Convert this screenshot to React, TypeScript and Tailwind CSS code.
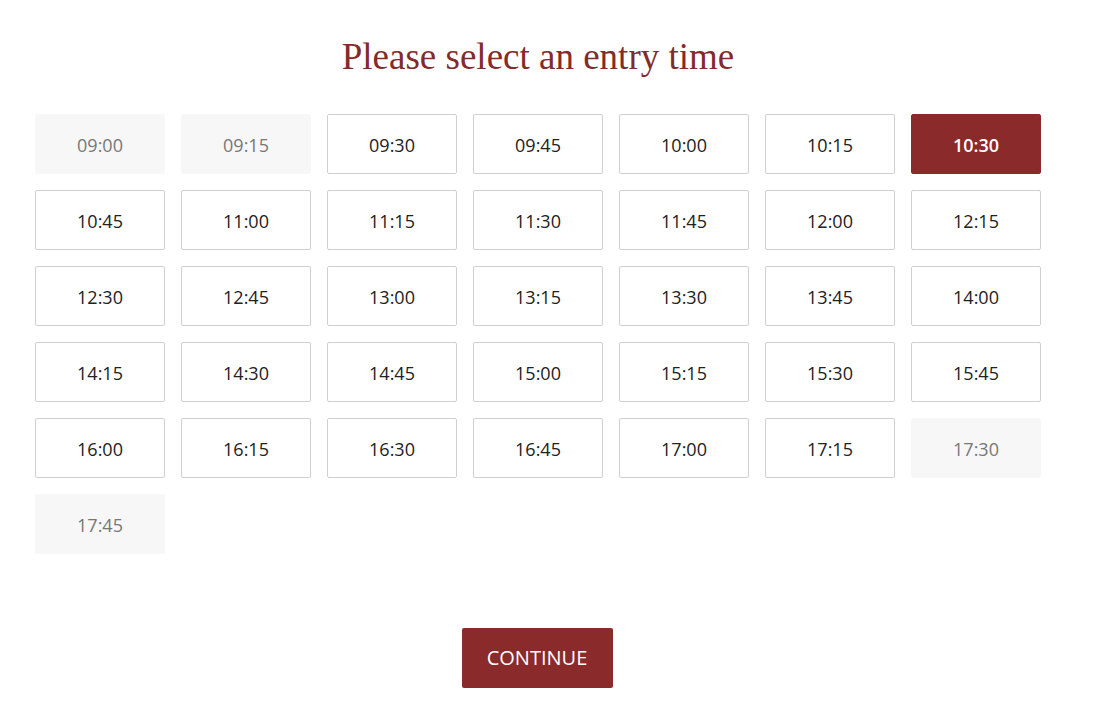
import { useState } from 'react';

const TIMES = [
  '09:00', '09:15', '09:30', '09:45', '10:00', '10:15', '10:30',
  '10:45', '11:00', '11:15', '11:30', '11:45', '12:00', '12:15',
  '12:30', '12:45', '13:00', '13:15', '13:30', '13:45', '14:00',
  '14:15', '14:30', '14:45', '15:00', '15:15', '15:30', '15:45',
  '16:00', '16:15', '16:30', '16:45', '17:00', '17:15', '17:30',
  '17:45',
];

const UNAVAILABLE = ['09:00', '09:15', '17:30', '17:45'];

export default function App() {
  const [selected, setSelected] = useState('10:30');

  return (
    <div className="min-h-screen bg-white font-['Open_Sans','Liberation_Sans',sans-serif]">
      <div className="w-[1006px] ml-[35px] pt-[33px]">
        {/* TITLE */}
        <h1 className="text-center text-[37px] leading-[48px] text-[#832b2b] font-['Liberation_Serif',serif]">
          Please select an entry time
        </h1>

        {/* TIME GRID */}
        <div className="mt-[33px] grid grid-cols-7 gap-4">
          {TIMES.map((t) => {
            const off = UNAVAILABLE.includes(t);
            const on = t === selected;
            let cls = 'border-[#cfcfcf] bg-white text-[#222] font-medium';
            if (off) cls = 'border-[#f7f7f7] bg-[#f7f7f7] text-[#777] font-medium cursor-default';
            if (on) cls = 'border-[#8b2a2a] bg-[#8b2a2a] text-white font-semibold';
            return (
              <button
                key={t}
                disabled={off}
                onClick={() => setSelected(t)}
                className={`h-[60px] w-[130px] rounded-[2px] border pt-[2px] text-[18px] ${cls}`}
              >
                {t}
              </button>
            );
          })}
        </div>

        {/* CONTINUE */}
        <div className="mt-[74px] flex justify-center">
          <button className="h-[60px] w-[151px] -translate-x-px rounded-[2px] bg-[#8b2a2a] text-white text-[20px] font-medium uppercase">
            Continue
          </button>
        </div>
      </div>
    </div>
  );
}
